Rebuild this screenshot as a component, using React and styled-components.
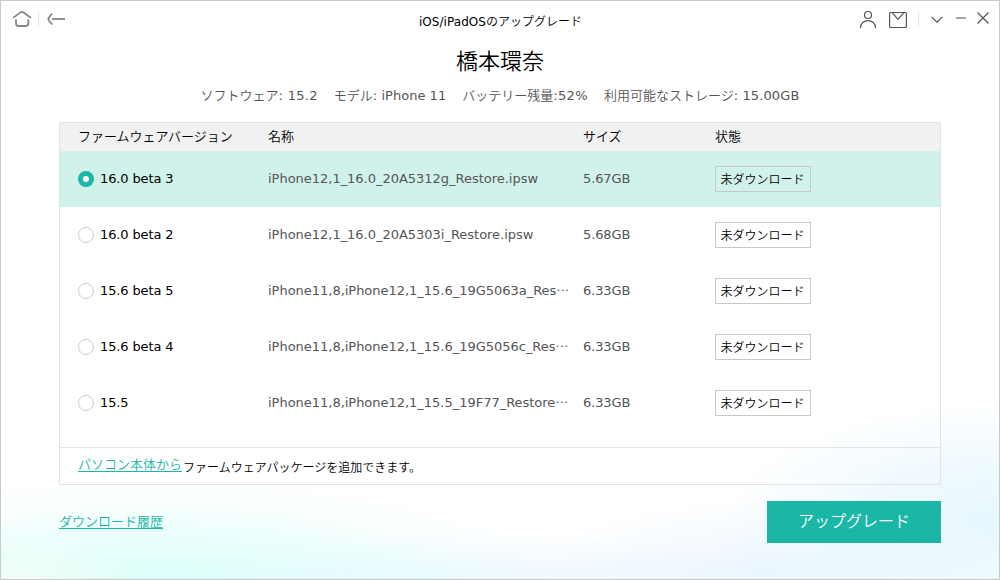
import React, { useState } from 'react';
import styled, { createGlobalStyle } from 'styled-components';

const GlobalStyle = createGlobalStyle`
  * {
    box-sizing: border-box;
  }

  body {
    margin: 0;
    font-family: 'Noto Sans CJK JP', sans-serif;
    font-weight: 350;
    font-size: 13px;
    color: #000;
  }
`;

const Window = styled.div`
  display: flex;
  flex-direction: column;
  width: 1000px;
  height: 580px;
  overflow: hidden;
  border: 1px solid #c9c9c9;
  background:
    radial-gradient(ellipse 130px 45px at 0 100%, rgba(240, 255, 246, 1), rgba(240, 255, 246, 0) 100%),
    radial-gradient(ellipse 400px 105px at 160px 100%, rgba(218, 255, 250, 0.95), rgba(222, 255, 251, 0.6) 45%, rgba(230, 255, 252, 0.18) 75%, rgba(230, 255, 252, 0) 100%),
    radial-gradient(ellipse 340px 60px at 430px 102%, rgba(228, 246, 255, 0.9), rgba(228, 246, 255, 0) 100%),
    radial-gradient(ellipse 280px 120px at 100% 520px, rgba(228, 246, 254, 0.9), rgba(228, 246, 254, 0.55) 50%, rgba(228, 246, 254, 0) 100%),
    radial-gradient(ellipse 240px 80px at 760px 100%, rgba(230, 243, 255, 0.85), rgba(230, 243, 255, 0) 100%),
    #fff;
`;

const TitleBar = styled.header`
  display: grid;
  grid-template-columns: 1fr auto 1fr;
  align-items: center;
  height: 38px;
  padding: 0 10px 0 11px;
  font-size: 12px;
`;

const WindowTitle = styled.span`
  line-height: 18px;
  padding-top: 2px;
`;

const Tools = styled.div`
  display: flex;
  align-items: center;
  justify-content: ${(props) => (props.$end ? 'flex-end' : 'flex-start')};
  height: 36px;
  padding-bottom: 2px;
`;

const IconButton = styled.button`
  display: flex;
  padding: 0;
  border: none;
  background: none;
  cursor: pointer;
  margin-left: ${(props) => props.$gap || 0}px;

  svg {
    display: block;
    fill: none;
    stroke: ${(props) => props.$stroke || '#555'};
    stroke-width: ${(props) => props.$weight || 1.2};
  }
`;

const Separator = styled.i`
  width: 1px;
  height: 14px;
  margin-left: ${(props) => props.$gap}px;
  background: #e2e2e2;
`;

const Latin = styled.span`
  font-family: 'DejaVu Sans', sans-serif;
  font-weight: 400;
  letter-spacing: ${(props) => props.$spacing || '-0.02px'};
`;

const DeviceName = styled.h1`
  margin: 4px 0 0;
  font-size: 22px;
  line-height: 32px;
  font-weight: 350;
  text-align: center;
`;

const DeviceInfo = styled.div`
  display: flex;
  justify-content: center;
  gap: 16px;
  margin-top: 10px;
  line-height: 20px;
  color: #555;
  white-space: pre;
`;

const Table = styled.section`
  display: flex;
  flex-direction: column;
  height: 363px;
  margin: 16px 58px 0;
  border: 1px solid #e3e3e3;
`;

const Row = styled.div`
  display: grid;
  grid-template-columns: 190px 315px 132px 1fr;
  align-items: center;
  height: 56px;
  padding-left: 18px;
  line-height: 18px;
  background: ${(props) => (props.$selected ? '#d1f1eb' : 'transparent')};
`;

const HeadRow = styled(Row)`
  height: 28px;
  padding-bottom: 2px;
  background: #f1f1f1;
`;

const Version = styled.label`
  display: flex;
  align-items: center;
  gap: 6px;
`;

const Radio = styled.input`
  appearance: none;
  width: 16px;
  height: 16px;
  margin: 0;
  border: 1px solid #ccc;
  border-radius: 50%;
  background: #fff;

  &:checked {
    border: 5px solid #1ab6a6;
  }
`;

const Detail = styled.span`
  padding-bottom: 2px;
  color: #555;
  white-space: nowrap;
`;

const StatusButton = styled.button`
  width: 96px;
  height: 26px;
  padding: 0 1px 1px 0;
  border: 1px solid #c9c9c9;
  background: transparent;
  color: #000;
  font: inherit;
  font-size: 12px;
  line-height: 22px;
`;

const TableFooter = styled.div`
  display: flex;
  align-items: flex-start;
  height: 37px;
  margin-top: auto;
  padding: 6px 18px 0;
  border-top: 1px solid #e3e3e3;
`;

const Link = styled.a`
  color: #1ab6a6;
  line-height: 19px;
  text-decoration: underline;
  text-underline-offset: 2px;
`;

const Hint = styled.span`
  margin: 4px 0 0 1px;
  font-size: 12px;
  line-height: 18px;
`;

const Actions = styled.footer`
  display: flex;
  align-items: center;
  justify-content: space-between;
  margin: 16px 58px 0;

  ${Link} {
    padding-bottom: 4px;
  }
`;

const UpgradeButton = styled.button`
  width: 174px;
  height: 42px;
  padding: 0 0 4px;
  border: none;
  background: #1ab6a6;
  color: #fff;
  font: inherit;
  font-size: 16px;
  cursor: pointer;
`;

const firmwares = [
  { version: '16.0 beta 3', file: 'iPhone12,1_16.0_20A5312g_Restore.ipsw', size: '5.67GB' },
  { version: '16.0 beta 2', file: 'iPhone12,1_16.0_20A5303i_Restore.ipsw', size: '5.68GB' },
  { version: '15.6 beta 5', file: 'iPhone11,8,iPhone12,1_15.6_19G5063a_Res', size: '6.33GB', cut: true },
  { version: '15.6 beta 4', file: 'iPhone11,8,iPhone12,1_15.6_19G5056c_Res', size: '6.33GB', cut: true },
  { version: '15.5', file: 'iPhone11,8,iPhone12,1_15.5_19F77_Restore', size: '6.33GB', cut: true },
];

const App = () => {
  const [selected, setSelected] = useState(0);

  return (
    <>
      <GlobalStyle />
      <Window lang="ja">
        <TitleBar>
          <Tools>
            <IconButton $stroke="#858585" $weight={1.8} aria-label="Home">
              <svg width="20" height="18" viewBox="0 0 20 18" strokeLinecap="round">
                <path d="M1.8 7.4 L8.4 2.4 Q10 1.3 11.6 2.4 L18.4 7.4" />
                <path d="M4 10 V13.2 Q4 16 6.8 16 H13.5 Q16.3 16 16.3 13.2 V10" />
              </svg>
            </IconButton>
            <Separator $gap={6} />
            <IconButton $gap={8} $stroke="#858585" $weight={1.8} aria-label="Back">
              <svg width="19" height="14" viewBox="0 0 19 14">
                <path d="M5.2 1.5 L2.2 5 Q0.6 7 2.2 9 L5.2 12.5" />
                <path d="M5 7 H18" />
              </svg>
            </IconButton>
          </Tools>
          <WindowTitle>
            <Latin $spacing="0.05px">iOS/iPadOS</Latin>のアップグレード
          </WindowTitle>
          <Tools $end>
            <IconButton aria-label="Account">
              <svg width="18" height="18" viewBox="0 0 18 18">
                <circle cx="9" cy="5" r="3.5" />
                <path d="M1.4 18 C1.4 8.2 16.6 8.2 16.6 18" />
              </svg>
            </IconButton>
            <IconButton $gap={12} aria-label="Mail">
              <svg width="18" height="18" viewBox="0 0 18 18">
                <rect x="0.6" y="2.5" width="16.8" height="15" rx="1" />
                <path d="M3.4 2.8 L9 9.4 L14.6 2.8" />
              </svg>
            </IconButton>
            <Separator $gap={11} />
            <IconButton $gap={12} aria-label="Menu">
              <svg width="12" height="8" viewBox="0 0 12 8">
                <path d="M0.6 1.8 L6 7.2 L11.4 1.8" />
              </svg>
            </IconButton>
            <IconButton $gap={13} $stroke="#a5a5a5" $weight={2} aria-label="Minimize">
              <svg width="10" height="6" viewBox="0 0 10 6">
                <path d="M0 2 H10" />
              </svg>
            </IconButton>
            <IconButton $gap={11} aria-label="Close">
              <svg width="12" height="14" viewBox="0 0 12 14">
                <path d="M0.5 0.5 L11.5 11.5 M11.5 0.5 L0.5 11.5" />
              </svg>
            </IconButton>
          </Tools>
        </TitleBar>

        <DeviceName>橋本環奈</DeviceName>
        <DeviceInfo>
          <span>ソフトウェア<Latin $spacing="0.3px">: 15.2</Latin></span>
          <span>モデル<Latin $spacing="0.03px">: iPhone 11</Latin></span>
          <span>バッテリー残量<Latin $spacing="0.35px">:52%</Latin></span>
          <span>利用可能なストレージ<Latin $spacing="0.12px">: 15.00GB</Latin></span>
        </DeviceInfo>

        <Table>
          <HeadRow>
            <span>ファームウェアバージョン</span>
            <span>名称</span>
            <span>サイズ</span>
            <span>状態</span>
          </HeadRow>
          {firmwares.map((item, index) => (
            <Row key={item.version} $selected={index === selected}>
              <Version>
                <Radio
                  type="radio"
                  name="firmware"
                  checked={index === selected}
                  onChange={() => setSelected(index)}
                />
                <Latin $spacing="-0.12px">{item.version}</Latin>
              </Version>
              <Detail>
                <Latin>{item.file}</Latin>
                {item.cut && '…'}
              </Detail>
              <Detail>
                <Latin $spacing="-0.12px">{item.size}</Latin>
              </Detail>
              <StatusButton>未ダウンロード</StatusButton>
            </Row>
          ))}
          <TableFooter>
            <Link href="#local">パソコン本体から</Link>
            <Hint>ファームウェアパッケージを追加できます。</Hint>
          </TableFooter>
        </Table>

        <Actions>
          <Link href="#history">ダウンロード履歴</Link>
          <UpgradeButton>アップグレード</UpgradeButton>
        </Actions>
      </Window>
    </>
  );
};

export default App;
